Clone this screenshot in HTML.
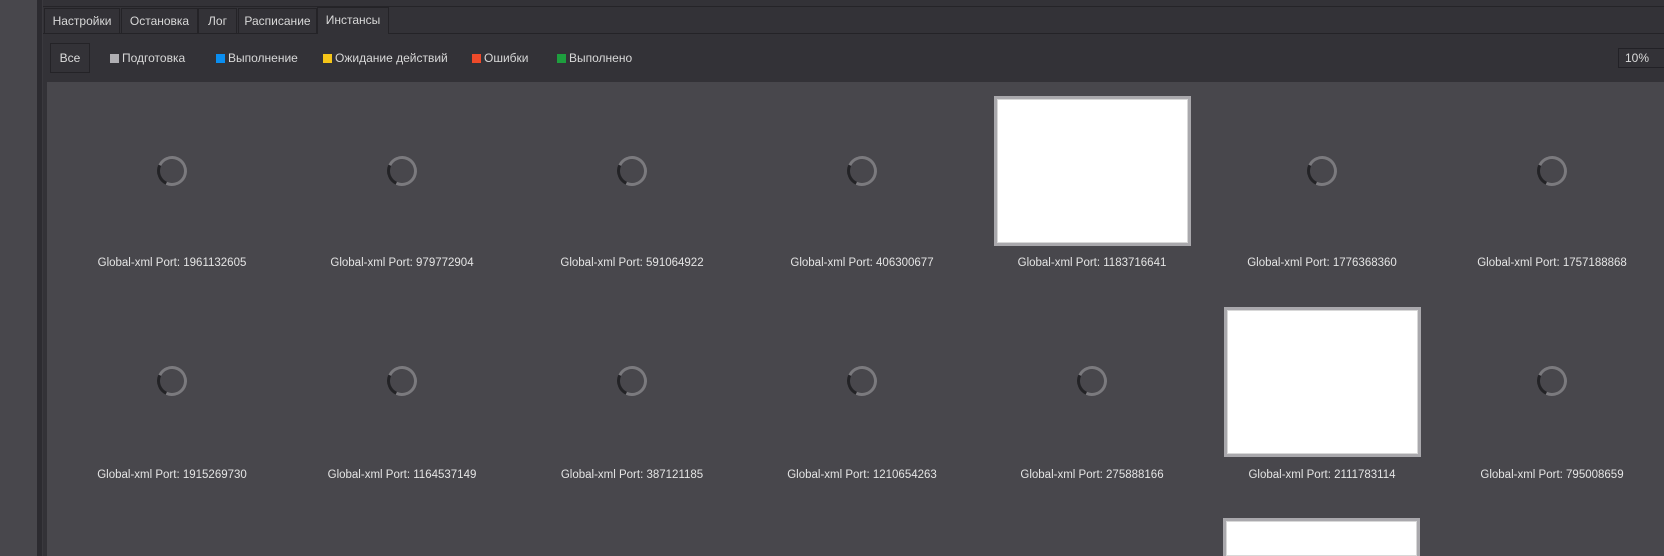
<!DOCTYPE html>
<html><head><meta charset="utf-8"><style>
*{margin:0;padding:0;box-sizing:border-box}
html,body{width:1664px;height:556px;overflow:hidden}
body{background:#333237;font-family:"Liberation Sans",sans-serif;color:#dcdcdc;position:relative}
.abs{position:absolute}
.left{left:0;top:0;width:37px;height:556px;background:#48474c}
.sep{left:37px;top:0;width:6px;height:556px;background:#2c2b30;border-right:1px solid #3a393e}
.top{left:43px;top:0;width:1621px;height:7px;background:#333237;border-bottom:1px solid #252428}
.tabline{left:43px;top:33px;width:1621px;height:1px;background:#242327}
.tab{top:8px;height:25px;background:#333237;border:1px solid #242327;border-bottom:none;font-size:12px;line-height:25px;text-align:center;color:#d8d8d8}
.tab.act{top:7px;height:27px;background:#333237;z-index:2}
.btn{left:50px;top:43px;width:40px;height:30px;border:1px solid #242327;font-size:12px;line-height:28px;text-align:center}
.lg{top:51px;font-size:12px;line-height:14px;color:#d8d8d8}
.sq{display:inline-block;width:9px;height:9px;margin-right:3px;vertical-align:-1px}
.pct{left:1618px;top:48px;width:50px;height:20px;background:#333237;border:1px solid #222126;font-size:12px;line-height:18px;padding-left:6px}
.content{left:47px;top:82px;width:1617px;height:474px;background:#48474c;overflow:hidden}
.sp{width:30px;height:30px;border-radius:50%;border:3px solid #7b7a7e;border-left-color:#232326;border-top-color:#7b7a7e;transform:rotate(-20deg)}
.lbl{width:230px;font-size:11.5px;text-align:center;color:#e4e4e4}
.box{width:197px;height:150px;background:#fff;border:3px solid #a9a8ac;box-shadow:inset 0 0 0 1px #d8d8d8}
</style></head><body>
<div class="abs left"></div>
<div class="abs sep"></div>
<div class="abs top"></div>
<div class="abs tabline"></div>
<div class="abs tab" style="left:44px;width:76px">Настройки</div>
<div class="abs tab" style="left:121px;width:77px">Остановка</div>
<div class="abs tab" style="left:198px;width:39px">Лог</div>
<div class="abs tab" style="left:238px;width:79px">Расписание</div>
<div class="abs tab act" style="left:317px;width:72px">Инстансы</div>
<div class="abs btn">Все</div>
<div class="abs lg" style="left:110px"><span class="sq" style="background:#b0afb3"></span>Подготовка</div>
<div class="abs lg" style="left:216px"><span class="sq" style="background:#0a8ef0"></span>Выполнение</div>
<div class="abs lg" style="left:323px"><span class="sq" style="background:#f5c518"></span>Ожидание действий</div>
<div class="abs lg" style="left:472px"><span class="sq" style="background:#ee4a2a"></span>Ошибки</div>
<div class="abs lg" style="left:557px"><span class="sq" style="background:#1e9e3e"></span>Выполнено</div>
<div class="abs pct">10%</div>
<div class="abs content"></div>
<div id="g"></div>
<script>
var cx=[172,402,632,862,1092,1322,1552];
var l1=["1961132605","979772904","591064922","406300677","1183716641","1776368360","1757188868"];
var l2=["1915269730","1164537149","387121185","1210654263","275888166","2111783114","795008659"];
var h="";
function cell(c,row,txt,box){
 var sy=row==0?171:381, ly=row==0?257:469, by=row==0?96:307;
 if(box) h+='<div class="abs box" style="left:'+(c-98)+'px;top:'+by+'px"></div>';
 else h+='<div class="abs sp" style="left:'+(c-15)+'px;top:'+(sy-15)+'px"></div>';
 h+='<div class="abs lbl" style="left:'+(c-115)+'px;top:'+ly+'px">Global-xml Port: '+txt+'</div>';
}
for(var i=0;i<7;i++){cell(cx[i],0,l1[i],i==4);cell(cx[i],1,l2[i],i==5);}
h+='<div class="abs box" style="left:1223px;top:518px;height:38px;border-bottom:none"></div>';
document.getElementById("g").innerHTML=h;
</script>
</body></html>
